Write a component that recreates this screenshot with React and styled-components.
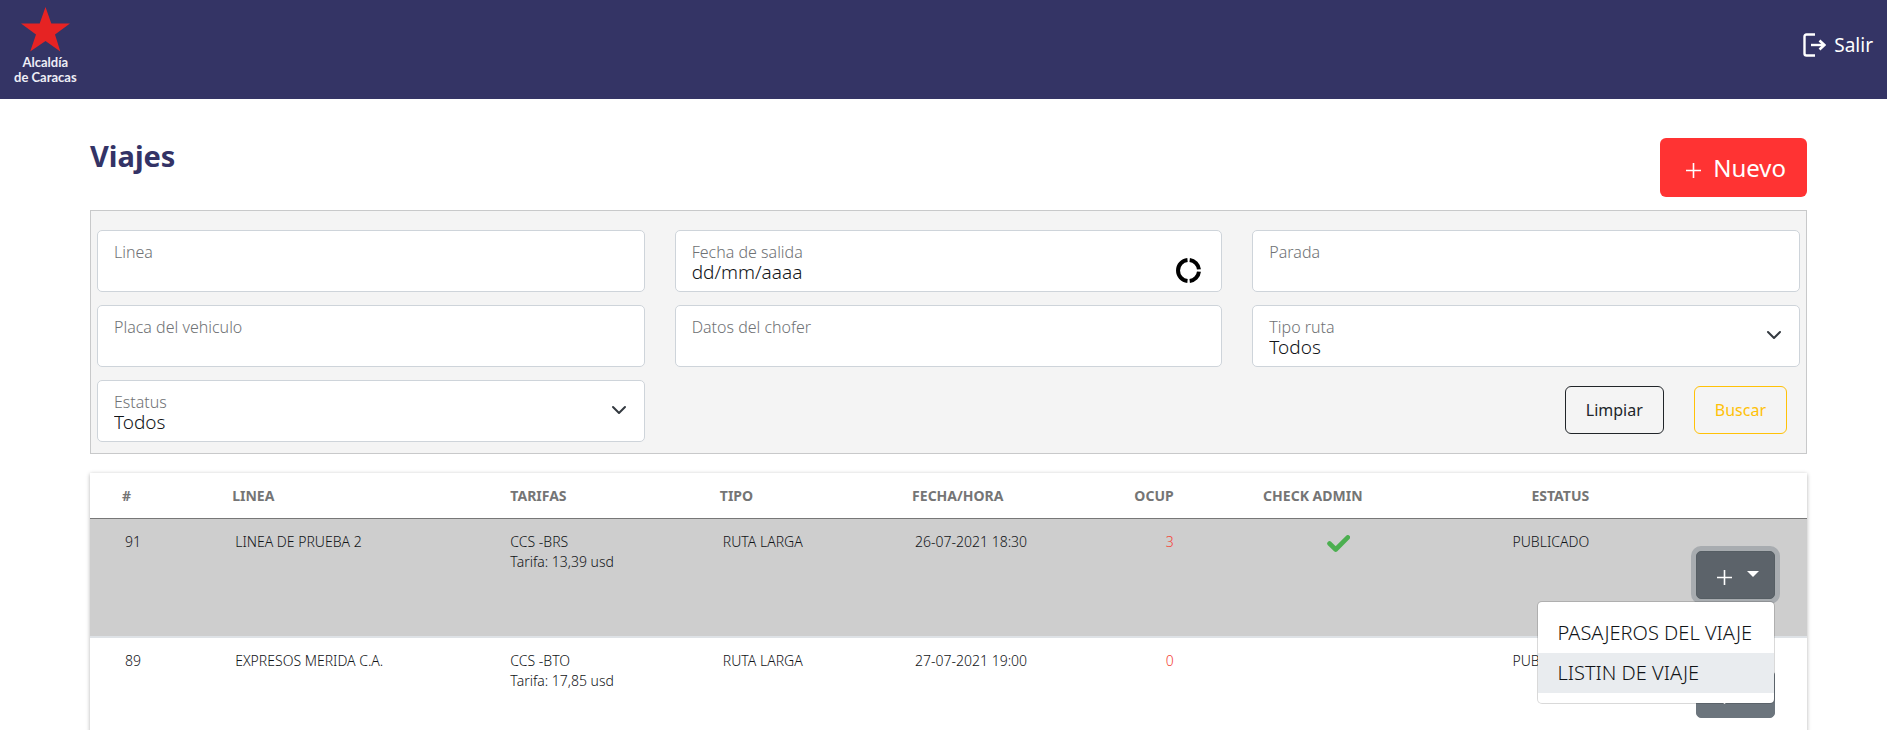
import React, { useState } from "react";
import styled, { createGlobalStyle, css } from "styled-components";

const GlobalStyle = createGlobalStyle`
  *, *::before, *::after { box-sizing: border-box; }
  body {
    margin: 0;
    background: #fff;
    color: #212529;
    font-family: "Noto Sans", "Open Sans", sans-serif;
    font-weight: 300;
    font-size: 16px;
  }
  button, input, select { font: inherit; color: inherit; }
`;

const TopBar = styled.header`
  display: flex;
  justify-content: space-between;
  align-items: flex-start;
  height: 99px;
  padding: 7px 14px 0;
  background: #343465;
  color: #fff;
`;

const Brand = styled.a`
  display: flex;
  flex-direction: column;
  align-items: center;
  gap: 3px;
  color: #eeeef6;
  text-decoration: none;
  text-align: center;
  font: 700 13px/15px Lato, sans-serif;
`;

const SignOut = styled.a`
  display: flex;
  align-items: center;
  gap: 8px;
  margin-top: 22px;
  color: #fff;
  text-decoration: none;
  font-size: 19px;
  font-weight: 400;
  line-height: 32px;
`;

const Page = styled.main`
  margin: 0 80px 0 90px;
  padding: 39px 0;
`;

const TitleRow = styled.div`
  display: flex;
  justify-content: space-between;
  align-items: flex-start;
  margin-bottom: 13px;
`;

const Title = styled.h1`
  margin: 0;
  color: #333366;
  font-size: 29px;
  line-height: 36px;
  font-weight: 700;
`;

const NewButton = styled.button`
  display: flex;
  align-items: center;
  gap: 12px;
  height: 59px;
  padding: 0 21px 0 26px;
  border: 0;
  border-radius: 6px;
  background: #ff3333;
  color: #fff;
  font-size: 24px;
  font-weight: 400;
  cursor: pointer;
`;

const Filters = styled.form`
  display: grid;
  grid-template-columns: repeat(3, minmax(0, 1fr));
  gap: 13px 30px;
  margin-bottom: 19px;
  padding: 19px 6px 11px;
  border: 1px solid #c8c9ca;
  background: #f4f4f4;
`;

const Field = styled.div`
  position: relative;
`;

const FieldLabel = styled.label`
  position: absolute;
  top: 11px;
  left: 17px;
  color: #6f7275;
  font-size: 16px;
  line-height: 22px;
  pointer-events: none;
`;

const control = css`
  display: block;
  width: 100%;
  height: 62px;
  padding: 26px 16px 4px;
  border: 1px solid #ced4da;
  border-radius: 5px;
  background: #fff;
  color: #111417;
  font-size: 19px;
  outline: none;
`;

const TextInput = styled.input`
  ${control}
  &::placeholder { color: #111417; opacity: 1; }
`;

const Select = styled.select`
  ${control}
  appearance: none;
`;

const Chevron = styled.svg`
  position: absolute;
  top: 22px;
  right: 18px;
  pointer-events: none;
`;

const PickerButton = styled.button`
  position: absolute;
  right: 21px;
  bottom: 9px;
  display: flex;
  padding: 0;
  border: 0;
  background: none;
`;

const FilterActions = styled.div`
  grid-column: 3;
  display: flex;
  justify-content: flex-end;
  align-items: center;
  gap: 30px;
  padding: 0 13px 2px 0;
`;

const OutlineButton = styled.button`
  height: 48px;
  padding: 0 20px;
  border: 1px solid ${(p) => p.$color};
  border-radius: 6px;
  background: transparent;
  color: ${(p) => p.$color};
  font-size: 16px;
  font-weight: 400;
  cursor: pointer;
`;

const Table = styled.table`
  width: 100%;
  table-layout: fixed;
  border-collapse: separate;
  border-spacing: 0;
  box-shadow: 0 1px 4px rgba(0, 0, 0, 0.3);
  font-size: 14px;
  line-height: 20px;
`;

const Col = styled.col`
  width: ${(p) => p.$share}%;
`;

const HeadCell = styled.th`
  height: 46px;
  padding: 0 10px;
  border-bottom: 1px solid #777;
  color: #757575;
  font-size: 14px;
  font-weight: 700;
  text-align: ${(p) => (p.$end ? "right" : "left")};
  &:first-child { padding-left: 32px; }
`;

const Row = styled.tr`
  background: ${(p) => (p.$active ? "#cecece" : "#fff")};
`;

const Cell = styled.td`
  height: 119px;
  padding: 13px 10px 0 ${(p) => (p.$flush ? 10 : 13)}px;
  border-bottom: 2px solid #dee2e6;
  vertical-align: top;
  text-align: ${(p) => (p.$end ? "right" : "left")};
  color: ${(p) => (p.$alert ? "#f44336" : "#111417")};
  &:first-child { padding-left: 35px; }
`;

const ActionCell = styled.td`
  padding: 32px 32px 0 0;
  border-bottom: 2px solid #dee2e6;
  vertical-align: top;
`;

const CheckIcon = styled.svg`
  display: block;
  margin: 3px 13px 0 auto;
`;

const Dropdown = styled.div`
  position: relative;
  width: 79px;
  margin-left: auto;
`;

const DropdownButton = styled.button`
  display: flex;
  align-items: center;
  justify-content: center;
  gap: 15px;
  width: 100%;
  height: 48px;
  padding: 4px 0 0 4px;
  border: 1px solid ${(p) => (p.$open ? "#565e64" : "#6c757d")};
  border-radius: 5px;
  background: ${(p) => (p.$open ? "#5c636a" : "#6c757d")};
  box-shadow: ${(p) => (p.$open ? "0 0 0 5px rgba(130, 138, 145, 0.5)" : "none")};
  color: #fff;
  cursor: pointer;
`;

const Caret = styled.span`
  margin-bottom: 6px;
  border-top: 6px solid #fff;
  border-left: 6px solid transparent;
  border-right: 6px solid transparent;
`;

const Menu = styled.div`
  position: absolute;
  z-index: 2;
  top: 50px;
  right: 0;
  padding: 11px 0 10px;
  border: 1px solid rgba(0, 0, 0, 0.15);
  border-radius: 5px;
  background: #fff;
  background-clip: padding-box;
`;

const MenuItem = styled.a`
  display: block;
  padding: 0 22px 0 20px;
  background: ${(p) => (p.$hover ? "#e9ecef" : "transparent")};
  color: #111417;
  font-size: 20px;
  line-height: 40px;
  text-decoration: none;
  white-space: nowrap;
`;

const Plus = () => (
  <svg width="15" height="15" viewBox="0 0 15 15" aria-hidden="true">
    <path d="M7.5 0v15M0 7.5h15" stroke="currentColor" strokeWidth="1.6" />
  </svg>
);

const NewPlus = styled.span`
  display: flex;
  margin-top: 6px;
`;

function SelectField({ id, label }) {
  return (
    <Field>
      <Select id={id} defaultValue="Todos">
        <option>Todos</option>
      </Select>
      <FieldLabel htmlFor={id}>{label}</FieldLabel>
      <Chevron width="16" height="16" viewBox="0 0 16 16" aria-hidden="true">
        <path d="M2 5l6 6 6-6" fill="none" stroke="#343a40" strokeWidth="2" strokeLinecap="round" strokeLinejoin="round" />
      </Chevron>
    </Field>
  );
}

function InputField({ id, label, placeholder, children }) {
  return (
    <Field>
      <TextInput id={id} type="text" placeholder={placeholder} />
      <FieldLabel htmlFor={id}>{label}</FieldLabel>
      {children}
    </Field>
  );
}

const SHARES = [7.7, 16.2, 12.2, 11.2, 9.4, 7, 11, 13.2, 12.1];

const HEADS = [
  ["#"], ["LINEA"], ["TARIFAS"], ["TIPO"], ["FECHA/HORA"],
  ["OCUP", true], ["CHECK ADMIN", true], ["ESTATUS", true], [""],
];

const TRIPS = [
  { id: 91, line: "LINEA DE PRUEBA 2", route: "CCS -BRS", fare: "13,39", date: "26-07-2021 18:30", taken: 3, checked: true },
  { id: 89, line: "EXPRESOS MERIDA C.A.", route: "CCS -BTO", fare: "17,85", date: "27-07-2021 19:00", taken: 0, checked: false },
];

export default function App() {
  const [openId, setOpenId] = useState(91);
  return (
    <>
      <GlobalStyle />
      <TopBar>
        <Brand href="#">
          <svg width="49" height="45" viewBox="0 0 49 45" aria-hidden="true">
            <path d="M24.5 0l5.8 16.5H49L34 27.5 39.3 44.5 24.5 34 9.2 44.5 15 27.5 0 16.5h18.7z" fill="#e62323" />
          </svg>
          <span>Alcaldía<br />de Caracas</span>
        </Brand>
        <SignOut href="#">
          <svg width="23" height="24" viewBox="0 0 23 24" aria-hidden="true">
            <path d="M12 1.5H3.5Q1.5 1.5 1.5 3.5V20.5Q1.5 22.5 3.5 22.5H12" fill="none" stroke="#fff" strokeWidth="2.4" />
            <path d="M8 12h12" fill="none" stroke="#fff" strokeWidth="2.4" />
            <path d="M16.5 7.5L21.3 12L16.5 16.5" fill="none" stroke="#fff" strokeWidth="2.6" />
          </svg>
          Salir
        </SignOut>
      </TopBar>
      <Page>
        <TitleRow>
          <Title>Viajes</Title>
          <NewButton type="button">
            <NewPlus><Plus /></NewPlus>
            Nuevo
          </NewButton>
        </TitleRow>
        <Filters onSubmit={(e) => e.preventDefault()}>
          <InputField id="linea" label="Linea" />
          <InputField id="fecha" label="Fecha de salida" placeholder="dd/mm/aaaa">
            <PickerButton type="button" aria-label="Elegir fecha">
              <svg width="25" height="25" viewBox="0 0 25 25" aria-hidden="true">
                <g fill="none" stroke="#000" strokeWidth="4">
                  <path d="M11.5 2.05A10.5 10.5 0 0 0 11.5 22.95" />
                  <path d="M13.7 2.05A10.5 10.5 0 0 1 22.95 11.4" />
                  <path d="M22.95 13.6A10.5 10.5 0 0 1 13.7 22.95" />
                </g>
              </svg>
            </PickerButton>
          </InputField>
          <InputField id="parada" label="Parada" />
          <InputField id="placa" label="Placa del vehiculo" />
          <InputField id="chofer" label="Datos del chofer" />
          <SelectField id="ruta" label="Tipo ruta" />
          <SelectField id="estatus" label="Estatus" />
          <FilterActions>
            <OutlineButton type="reset" $color="#212529">Limpiar</OutlineButton>
            <OutlineButton type="submit" $color="#ffc107">Buscar</OutlineButton>
          </FilterActions>
        </Filters>
        <Table>
          <colgroup>
            {SHARES.map((share, i) => <Col key={i} $share={share} />)}
          </colgroup>
          <thead>
            <tr>
              {HEADS.map(([text, end]) => <HeadCell key={text} $end={end}>{text}</HeadCell>)}
            </tr>
          </thead>
          <tbody>
            {TRIPS.map((trip) => {
              const open = openId === trip.id;
              return (
                <Row key={trip.id} $active={open}>
                  <Cell>{trip.id}</Cell>
                  <Cell>{trip.line}</Cell>
                  <Cell $flush>{trip.route}<br />Tarifa: {trip.fare} usd</Cell>
                  <Cell>RUTA LARGA</Cell>
                  <Cell>{trip.date}</Cell>
                  <Cell $end $alert>{trip.taken}</Cell>
                  <Cell $end>
                    {trip.checked && (
                      <CheckIcon width="23" height="17" viewBox="0 0 23 17" role="img" aria-label="Sí">
                        <path d="M2.5 8.5L8.7 14.5L20.8 2.4" fill="none" stroke="#4caf50" strokeWidth="4.6" strokeLinecap="round" strokeLinejoin="round" />
                      </CheckIcon>
                    )}
                  </Cell>
                  <Cell $end>PUBLICADO</Cell>
                  <ActionCell>
                    <Dropdown>
                      <DropdownButton
                        type="button"
                        $open={open}
                        aria-expanded={open}
                        aria-label="Acciones"
                        onClick={() => setOpenId(open ? null : trip.id)}
                      >
                        <Plus />
                        <Caret />
                      </DropdownButton>
                      {open && (
                        <Menu>
                          <MenuItem href="#">PASAJEROS DEL VIAJE</MenuItem>
                          <MenuItem href="#" $hover>LISTIN DE VIAJE</MenuItem>
                        </Menu>
                      )}
                    </Dropdown>
                  </ActionCell>
                </Row>
              );
            })}
          </tbody>
        </Table>
      </Page>
    </>
  );
}
